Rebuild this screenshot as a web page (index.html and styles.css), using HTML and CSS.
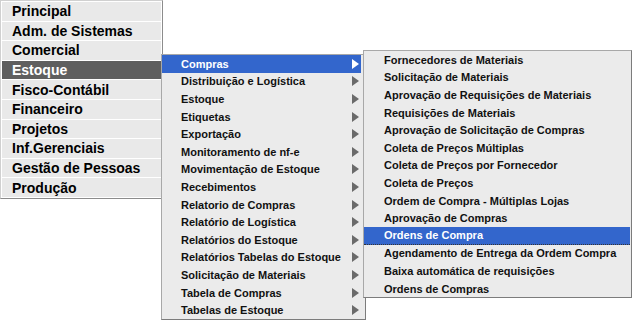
FILE: index.html
```html
<!DOCTYPE html>
<html lang="pt-BR">
<head>
<meta charset="utf-8">
<title>Menu</title>
<link rel="stylesheet" href="styles.css">
</head>
<body>
<div class="nav">
  <ul class="menu main">
    <li>Principal</li>
    <li>Adm. de Sistemas</li>
    <li>Comercial</li>
    <li class="active">Estoque</li>
    <li>Fisco-Contábil</li>
    <li>Financeiro</li>
    <li>Projetos</li>
    <li>Inf.Gerenciais</li>
    <li>Gestão de Pessoas</li>
    <li>Produção</li>
  </ul>

  <ul class="menu sub sub1">
    <li class="active"><span>Compras</span><svg class="arrow" width="7" height="10" viewBox="0 0 7 10"><path d="M0 0 L7 5 L0 10 Z"/></svg></li>
    <li><span>Distribuição e Logística</span><svg class="arrow" width="7" height="10" viewBox="0 0 7 10"><path d="M0 0 L7 5 L0 10 Z"/></svg></li>
    <li><span>Estoque</span><svg class="arrow" width="7" height="10" viewBox="0 0 7 10"><path d="M0 0 L7 5 L0 10 Z"/></svg></li>
    <li><span>Etiquetas</span><svg class="arrow" width="7" height="10" viewBox="0 0 7 10"><path d="M0 0 L7 5 L0 10 Z"/></svg></li>
    <li><span>Exportação</span><svg class="arrow" width="7" height="10" viewBox="0 0 7 10"><path d="M0 0 L7 5 L0 10 Z"/></svg></li>
    <li><span>Monitoramento de nf-e</span><svg class="arrow" width="7" height="10" viewBox="0 0 7 10"><path d="M0 0 L7 5 L0 10 Z"/></svg></li>
    <li><span>Movimentação de Estoque</span><svg class="arrow" width="7" height="10" viewBox="0 0 7 10"><path d="M0 0 L7 5 L0 10 Z"/></svg></li>
    <li><span>Recebimentos</span><svg class="arrow" width="7" height="10" viewBox="0 0 7 10"><path d="M0 0 L7 5 L0 10 Z"/></svg></li>
    <li><span>Relatorio de Compras</span><svg class="arrow" width="7" height="10" viewBox="0 0 7 10"><path d="M0 0 L7 5 L0 10 Z"/></svg></li>
    <li><span>Relatório de Logística</span><svg class="arrow" width="7" height="10" viewBox="0 0 7 10"><path d="M0 0 L7 5 L0 10 Z"/></svg></li>
    <li><span>Relatórios do Estoque</span><svg class="arrow" width="7" height="10" viewBox="0 0 7 10"><path d="M0 0 L7 5 L0 10 Z"/></svg></li>
    <li><span>Relatórios Tabelas do Estoque</span><svg class="arrow" width="7" height="10" viewBox="0 0 7 10"><path d="M0 0 L7 5 L0 10 Z"/></svg></li>
    <li><span>Solicitação de Materiais</span><svg class="arrow" width="7" height="10" viewBox="0 0 7 10"><path d="M0 0 L7 5 L0 10 Z"/></svg></li>
    <li><span>Tabela de Compras</span><svg class="arrow" width="7" height="10" viewBox="0 0 7 10"><path d="M0 0 L7 5 L0 10 Z"/></svg></li>
    <li><span>Tabelas de Estoque</span><svg class="arrow" width="7" height="10" viewBox="0 0 7 10"><path d="M0 0 L7 5 L0 10 Z"/></svg></li>
  </ul>

  <ul class="menu sub sub2">
    <li>Fornecedores de Materiais</li>
    <li>Solicitação de Materiais</li>
    <li>Aprovação de Requisições de Materiais</li>
    <li>Requisições de Materiais</li>
    <li>Aprovação de Solicitação de Compras</li>
    <li>Coleta de Preços Múltiplas</li>
    <li>Coleta de Preços por Fornecedor</li>
    <li>Coleta de Preços</li>
    <li>Ordem de Compra - Múltiplas Lojas</li>
    <li>Aprovação de Compras</li>
    <li class="active focus">Ordens de Compra</li>
    <li>Agendamento de Entrega da Ordem Compra</li>
    <li>Baixa automática de requisições</li>
    <li>Ordens de Compras</li>
  </ul>
</div>
</body>
</html>
```
FILE: styles.css
```css
html, body {
  margin: 0;
  padding: 0;
  background: #ffffff;
}

body {
  font-family: "Liberation Sans", Arial, sans-serif;
  color: #000;
}

.nav {
  position: relative;
  width: 632px;
  height: 324px;
}

.menu {
  list-style: none;
  margin: 0;
  box-sizing: border-box;
}

.main {
  width: 163px;
  padding: 1px;
  background: #ffffff;
  border: 1px solid;
  border-color: #d0d0d0 #8c8c8c #8c8c8c #d0d0d0;
  display: flex;
  flex-direction: column;
  gap: 1px;
}

.main li {
  height: 18.6px;
  background: #e9e9e9;
  font-size: 14px;
  font-weight: bold;
  padding-left: 10px;
  display: flex;
  align-items: center;
  white-space: nowrap;
}

.main li.active {
  background: #5f5f5f;
  color: #ffffff;
}

.sub {
  position: absolute;
  padding: 0;
  background: #ebebeb;
  border: 1px solid #8c8c8c;
  border-color: #a8a8a8 #7c7c7c #7c7c7c #a8a8a8;
}

.sub1 {
  left: 161px;
  top: 54px;
  width: 205px;
  padding-right: 4px;
}

.sub2 {
  left: 363px;
  top: 50px;
  width: 269px;
  padding-right: 1px;
}

.sub li {
  height: 17.6px;
  box-sizing: border-box;
  display: flex;
  align-items: center;
  font-size: 11px;
  font-weight: bold;
  color: #111;
  white-space: nowrap;
}

.sub1 li {
  padding-left: 19px;
}

.sub2 li {
  padding-left: 20px;
}

.arrow {
  margin-left: auto;
  margin-right: 2px;
  fill: #6a6a6a;
}

.sub li.active {
  background: #3366cc;
  color: #ffffff;
}

.sub li.active .arrow {
  fill: #ffffff;
}

.sub li.focus {
  border-bottom: 1px dotted #333;
}
```
